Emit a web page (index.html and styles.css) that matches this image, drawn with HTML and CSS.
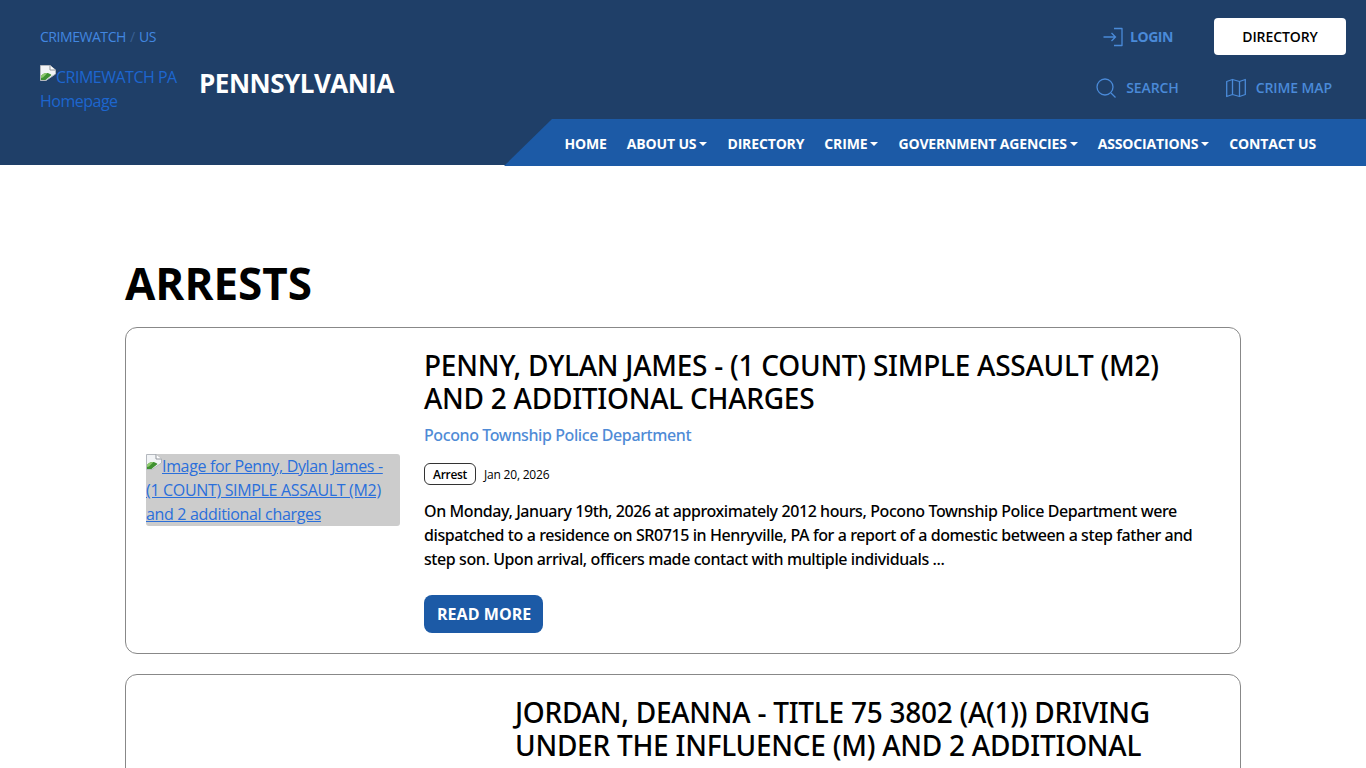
FILE: index.html
```html
<!DOCTYPE html>
<html lang="en">
<head>
  <meta charset="UTF-8" />
  <meta name="viewport" content="width=device-width, initial-scale=1.0"/>
  <title>Arrests - CRIMEWATCH PA</title>
  <link rel="stylesheet" href="styles.css">
</head>
<body>

  <svg class="sprite" width="0" height="0">
    <symbol id="broken" viewBox="0 0 16 16">
      <path d="M0.5 0.5H10L15.5 5V9L6 15.5H0.5Z" fill="#f2f4f6" stroke="#b4b8be"/>
      <path d="M10 0.5V5H15.5" fill="#fff" stroke="#8f949b"/>
      <path d="M1 15V11C3 8.5 6 7.5 9 8.5C10.5 9 11 9.5 11.5 10L5.5 15Z" fill="#3f9132"/>
      <path d="M1 11C3 8.5 5 7.8 7.5 8L3 12.5L1 13Z" fill="#8fca6e"/>
    </symbol>
  </svg>

  <header class="site-header">
    <div class="header-top">
      <div class="header-left">
        <div class="crumbs"><a href="#">CRIMEWATCH</a> <span class="sep">/</span> <a href="#">US</a></div>
        <div class="brand">
          <a class="brand-logo" href="#"><svg class="broken"><use href="#broken"/></svg>CRIMEWATCH PA Homepage</a>
          <span class="brand-name">PENNSYLVANIA</span>
        </div>
      </div>
      <div class="header-right">
        <div class="util-row">
          <a class="util-link login" href="#">
            <svg class="util-icon" width="20" height="20" viewBox="0 0 20 20" fill="none" stroke="currentColor" stroke-width="1.3">
              <path d="M0.5 10H12M8.5 6L12.5 10L8.5 14"/>
              <path d="M11 1.5H19V18.5H11" stroke-linejoin="round"/>
            </svg>
            LOGIN
          </a>
          <a class="directory-btn" href="#">DIRECTORY</a>
        </div>
        <div class="util-row second">
          <a class="util-link" href="#">
            <svg class="util-icon" width="20" height="20" viewBox="0 0 20 20" fill="none" stroke="currentColor" stroke-width="1.3">
              <circle cx="9" cy="9" r="8"/>
              <path d="M15 15L19.5 19.5"/>
            </svg>
            SEARCH
          </a>
          <a class="util-link" href="#">
            <svg class="util-icon" width="20" height="20" viewBox="0 0 20 20" fill="none" stroke="currentColor" stroke-width="1.3" stroke-linejoin="round">
              <path d="M0.7 3.5L6.5 1.5L13.5 3.5L19.3 1.5V16.5L13.5 18.5L6.5 16.5L0.7 18.5Z"/>
              <path d="M6.5 1.5V16.5M13.5 3.5V18.5"/>
            </svg>
            CRIME MAP
          </a>
        </div>
      </div>
    </div>
    <nav class="main-nav">
      <a href="#">HOME</a>
      <a class="has-menu" href="#">ABOUT US</a>
      <a href="#">DIRECTORY</a>
      <a class="has-menu" href="#">CRIME</a>
      <a class="has-menu" href="#">GOVERNMENT AGENCIES</a>
      <a class="has-menu" href="#">ASSOCIATIONS</a>
      <a href="#">CONTACT US</a>
    </nav>
  </header>

  <main class="content">
    <h1>ARRESTS</h1>

    <article class="arrest-card">
      <div class="thumb">
        <a class="thumb-alt" href="#"><svg class="broken"><use href="#broken"/></svg>Image for Penny, Dylan James - (1 COUNT) SIMPLE ASSAULT (M2) and 2 additional charges</a>
      </div>
      <div class="card-body">
        <h2>PENNY, DYLAN JAMES - (1 COUNT) SIMPLE ASSAULT (M2) AND 2 ADDITIONAL CHARGES</h2>
        <a class="agency" href="#">Pocono Township Police Department</a>
        <div class="meta">
          <span class="tag">Arrest</span>
          <span class="date">Jan 20, 2026</span>
        </div>
        <p>On Monday, January 19th, 2026 at approximately 2012 hours, Pocono Township Police Department were dispatched to a residence on SR0715 in Henryville, PA for a report of a domestic between a step father and step son. Upon arrival, officers made contact with multiple individuals ...</p>
        <a class="read-more" href="#">READ MORE</a>
      </div>
    </article>

    <article class="arrest-card">
      <div class="thumb wide"></div>
      <div class="card-body">
        <h2>JORDAN, DEANNA - TITLE 75 3802 (A(1)) DRIVING UNDER THE INFLUENCE (M) AND 2 ADDITIONAL</h2>
      </div>
    </article>
  </main>

</body>
</html>
```

FILE: styles.css
```css
html, body {
  height: 100%;
}

body {
  margin: 0;
  height: 100vh;
  overflow: hidden;
  background: #fff;
  color: #000;
  font-family: "Open Sans", "Noto Sans", sans-serif;
  font-size: 16px;
  line-height: 24px;
}

.sprite {
  position: absolute;
}

.broken {
  width: 16px;
  height: 16px;
  vertical-align: 2px;
}

/* Header */
.site-header {
  height: 165px;
  background: #1f3f68;
}

.header-top {
  display: flex;
  justify-content: space-between;
  height: 119px;
}

.header-left {
  padding: 25px 0 0 40px;
}

.crumbs {
  font-size: 14px;
  letter-spacing: -0.45px;
}

.crumbs a {
  color: #4287e0;
  text-decoration: none;
}

.crumbs .sep {
  color: #3a5f92;
  padding: 0 1px;
}

.brand {
  display: flex;
  align-items: flex-start;
  margin-top: 16px;
}

.brand-logo {
  width: 140px;
  color: #1d66cf;
  text-decoration: none;
  letter-spacing: -0.5px;
}

.brand-name {
  margin: 5px 0 0 19px;
  color: #fff;
  font-size: 26px;
  line-height: 26px;
  font-weight: 700;
  letter-spacing: -0.5px;
}

.header-right {
  padding: 18px 20px 0 0;
}

.util-row {
  display: flex;
  align-items: center;
  justify-content: flex-end;
  gap: 41px;
  height: 37px;
}

.util-row.second {
  gap: 47px;
  margin-top: 14px;
  padding-right: 14px;
}

.util-link {
  display: flex;
  align-items: center;
  gap: 10px;
  color: #4a8ad8;
  font-size: 14px;
  font-weight: 600;
  text-decoration: none;
  letter-spacing: -0.1px;
}

.util-link.login {
  gap: 7px;
  font-weight: 700;
  letter-spacing: -0.45px;
}

.directory-btn {
  display: block;
  width: 132px;
  background: #fff;
  border-radius: 4px;
  color: #000;
  font-size: 14px;
  font-weight: 600;
  line-height: 37px;
  text-align: center;
  text-decoration: none;
  letter-spacing: -0.1px;
}

.main-nav {
  display: flex;
  align-items: center;
  justify-content: flex-end;
  height: 45px;
  padding: 2px 40px 0 0;
  margin-left: 504px;
  background: #1c5aa6;
  clip-path: polygon(48px 0, 100% 0, 100% 100%, 0 100%);
}

.main-nav a {
  padding: 0 10px;
  color: #fff;
  font-size: 14px;
  font-weight: 700;
  text-decoration: none;
  letter-spacing: -0.15px;
}

.has-menu::after {
  content: "";
  display: inline-block;
  margin-left: 3px;
  vertical-align: 3px;
  border-top: 4px solid #fff;
  border-left: 4px solid transparent;
  border-right: 4px solid transparent;
}

/* Arrests list */
.content {
  width: 1116px;
  margin: 0 auto;
}

h1 {
  margin: 88px 0 14px;
  font-size: 44px;
  line-height: 60px;
  font-weight: 700;
}

.arrest-card {
  display: flex;
  align-items: center;
  gap: 24px;
  margin-bottom: 20px;
  padding: 20px;
  border: 1px solid #888;
  border-radius: 12px;
}

.thumb {
  flex: none;
  width: 254px;
  margin-bottom: 1px;
}

.thumb.wide {
  width: 345px;
}

.thumb-alt {
  display: block;
  padding-right: 8px;
  background: #ccc;
  border-radius: 3px;
  color: #2a6fdb;
  letter-spacing: -0.33px;
}

.card-body {
  flex: 1;
}

h2 {
  margin: 1px 0 7.2px;
  font-family: "Noto Sans", sans-serif;
  font-size: 28px;
  line-height: 33.4px;
  font-weight: 500;
  letter-spacing: -0.25px;
}

.agency {
  display: block;
  color: #4f8bd6;
  font-family: "Noto Sans", sans-serif;
  font-weight: 500;
  text-decoration: none;
  letter-spacing: -0.4px;
}

.meta {
  display: flex;
  align-items: center;
  gap: 8px;
  height: 24px;
  margin-top: 15px;
}

.tag {
  padding: 1px 8px 0;
  border: 1px solid #333;
  border-radius: 6px;
  font-size: 12px;
  line-height: 19px;
  font-weight: 600;
  letter-spacing: -0.3px;
}

.date {
  padding-top: 2px;
  font-size: 12px;
  line-height: 20px;
  letter-spacing: -0.2px;
}

p {
  margin: 13px 0 24px;
  font-family: "Noto Sans", sans-serif;
  font-weight: 500;
  letter-spacing: -0.41px;
}

.read-more {
  display: inline-block;
  padding: 0 12px 0 13px;
  background: #1c5aa6;
  border-radius: 8px;
  color: #fff;
  font-weight: 700;
  line-height: 38px;
  text-decoration: none;
  letter-spacing: 0.05px;
  vertical-align: top;
}
```
